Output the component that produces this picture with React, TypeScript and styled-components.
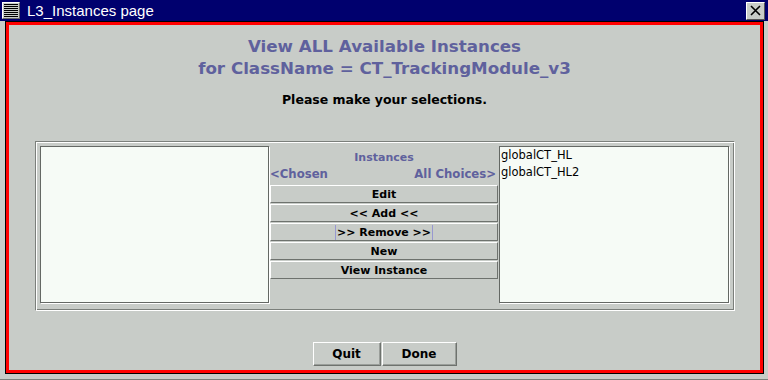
import * as React from 'react';
import styled, { createGlobalStyle } from 'styled-components';

const GlobalStyle = createGlobalStyle`
  html, body {
    margin: 0;
    padding: 0;
    background: #c8ccc8;
    overflow: hidden;
  }
`;

const Window = styled.div`
  width: 768px;
  height: 380px;
  display: flex;
  flex-direction: column;
  background: #c8ccc8;
  font-family: 'DejaVu Sans', sans-serif;
  box-sizing: border-box;
  border-bottom: 1px solid #7b7f7b;
`;

const TitleBar = styled.div`
  height: 21px;
  flex: none;
  display: flex;
  align-items: center;
  background: #00006e;
  color: #fff;
`;

const MenuBox = styled.div`
  width: 18px;
  height: 17px;
  margin-left: 2px;
  background: #c8ccc8;
  border-top: 1px solid #fff;
  border-left: 1px solid #fff;
  border-bottom: 1px solid #666;
  border-right: 1px solid #666;
  box-sizing: border-box;
  display: flex;
  align-items: center;
  justify-content: center;
`;

const TitleText = styled.span`
  margin-left: 7px;
  font-family: 'Liberation Sans', sans-serif;
  font-size: 15px;
`;

const CloseBox = styled.div`
  margin-left: auto;
  margin-right: 3px;
  width: 19px;
  height: 18px;
  background: #c8ccc8;
  border-top: 1px solid #fff;
  border-left: 1px solid #fff;
  border-bottom: 1px solid #555;
  border-right: 1px solid #555;
  box-sizing: border-box;
  display: flex;
  align-items: center;
  justify-content: center;
`;

const Frame = styled.div`
  flex: 1;
  display: flex;
  margin: 0 4px 5px 5px;
  border: 1px solid #000;
`;

const Content = styled.div`
  flex: 1;
  display: flex;
  flex-direction: column;
  align-items: center;
  border: 3px solid #ff0000;
`;

const Heading = styled.div`
  margin-top: 10px;
  color: #5f619d;
  font-weight: bold;
  font-size: 16.7px;
  line-height: 22px;
  text-align: center;
`;

const Prompt = styled.div`
  margin-top: 11px;
  color: #000;
  font-weight: bold;
  font-size: 12.5px;
  line-height: 20px;
`;

const Panel = styled.div`
  margin-top: 31px;
  width: 700px;
  height: 170px;
  box-sizing: border-box;
  padding: 4px 5px 4px 4px;
  border-top: 1px solid #7b7f7b;
  border-left: 1px solid #7b7f7b;
  border-bottom: 1px solid #fff;
  border-right: 1px solid #fff;
  box-shadow: inset 1px 1px 0 #fff, inset -1px -1px 0 #7b7f7b;
  display: grid;
  grid-template-columns: 1fr 230px 1fr;
`;

const ListBox = styled.div`
  background: #f6fbf6;
  border: 1px solid #646864;
  box-shadow: 1px 1px 0 #fff;
  padding: 0 1px;
  height: 157px;
  box-sizing: border-box;
`;

const ListItem = styled.div`
  font-size: 11.5px;
  line-height: 17px;
  color: #000;
`;

const Middle = styled.div`
  display: flex;
  flex-direction: column;
  padding: 3px 1px 0;
`;

const ColumnTitle = styled.div`
  color: #5f619d;
  font-weight: bold;
  font-size: 11px;
  line-height: 17px;
  text-align: center;
`;

const ChoiceRow = styled.div`
  display: flex;
  justify-content: space-between;
  color: #5f619d;
  font-weight: bold;
  font-size: 11.7px;
  line-height: 17px;
  padding-right: 2px;
  margin-bottom: 2px;
`;

const ActionButton = styled.button`
  height: 18px;
  margin: 0 0 1px;
  padding: 0;
  background: #c8ccc8;
  border-top: 1px solid #fff;
  border-left: 1px solid #fff;
  border-bottom: 1px solid #6e726e;
  border-right: 1px solid #6e726e;
  font-family: 'DejaVu Sans', sans-serif;
  font-weight: bold;
  font-size: 11px;
  color: #000;
  display: flex;
  align-items: center;
  justify-content: center;
`;

const FocusLabel = styled.span<{ $focused?: boolean }>`
  padding: 0 1px;
  border-left: 1px solid ${(p) => (p.$focused ? '#9898d0' : 'transparent')};
  border-right: 1px solid ${(p) => (p.$focused ? '#9898d0' : 'transparent')};
  line-height: 15px;
`;

const Footer = styled.div`
  margin-top: 31px;
  display: flex;
  gap: 1px;
`;

const DialogButton = styled.button<{ $w: number }>`
  width: ${(p) => p.$w}px;
  height: 24px;
  padding: 0;
  background: #c8ccc8;
  border-top: 1px solid #fff;
  border-left: 1px solid #fff;
  border-bottom: 1px solid #6e726e;
  border-right: 1px solid #6e726e;
  box-shadow: inset -1px -1px 0 #9a9e9a;
  font-family: 'DejaVu Sans', sans-serif;
  font-weight: bold;
  font-size: 12px;
  color: #000;
`;

const actions = ['Edit', '<< Add <<', '>> Remove >>', 'New', 'View Instance'];
const choices = ['globalCT_HL', 'globalCT_HL2'];

export default function App() {
  return (
    <Window>
      <GlobalStyle />
      <TitleBar>
        <MenuBox>
          <svg width="14" height="13" viewBox="0 0 14 13">
            {[0, 2, 4, 6, 8, 10, 12].map((y) => (
              <rect key={y} x="0" y={y} width="14" height="1" fill="#000" />
            ))}
          </svg>
        </MenuBox>
        <TitleText>L3_Instances page</TitleText>
        <CloseBox>
          <svg width="11" height="11" viewBox="0 0 11 11">
            <path d="M1 1 L10 10 M10 1 L1 10" stroke="#000" strokeWidth="1.6" />
          </svg>
        </CloseBox>
      </TitleBar>
      <Frame>
        <Content>
          <Heading>
            View ALL Available Instances
            <br />
            for ClassName = CT_TrackingModule_v3
          </Heading>
          <Prompt>Please make your selections.</Prompt>
          <Panel>
            <ListBox />
            <Middle>
              <ColumnTitle>Instances</ColumnTitle>
              <ChoiceRow>
                <span>&lt;Chosen</span>
                <span>All Choices&gt;</span>
              </ChoiceRow>
              {actions.map((a) => (
                <ActionButton key={a}>
                  <FocusLabel $focused={a === '>> Remove >>'}>{a}</FocusLabel>
                </ActionButton>
              ))}
            </Middle>
            <ListBox>
              {choices.map((c) => (
                <ListItem key={c}>{c}</ListItem>
              ))}
            </ListBox>
          </Panel>
          <Footer>
            <DialogButton $w={68}>Quit</DialogButton>
            <DialogButton $w={75}>Done</DialogButton>
          </Footer>
        </Content>
      </Frame>
    </Window>
  );
}
